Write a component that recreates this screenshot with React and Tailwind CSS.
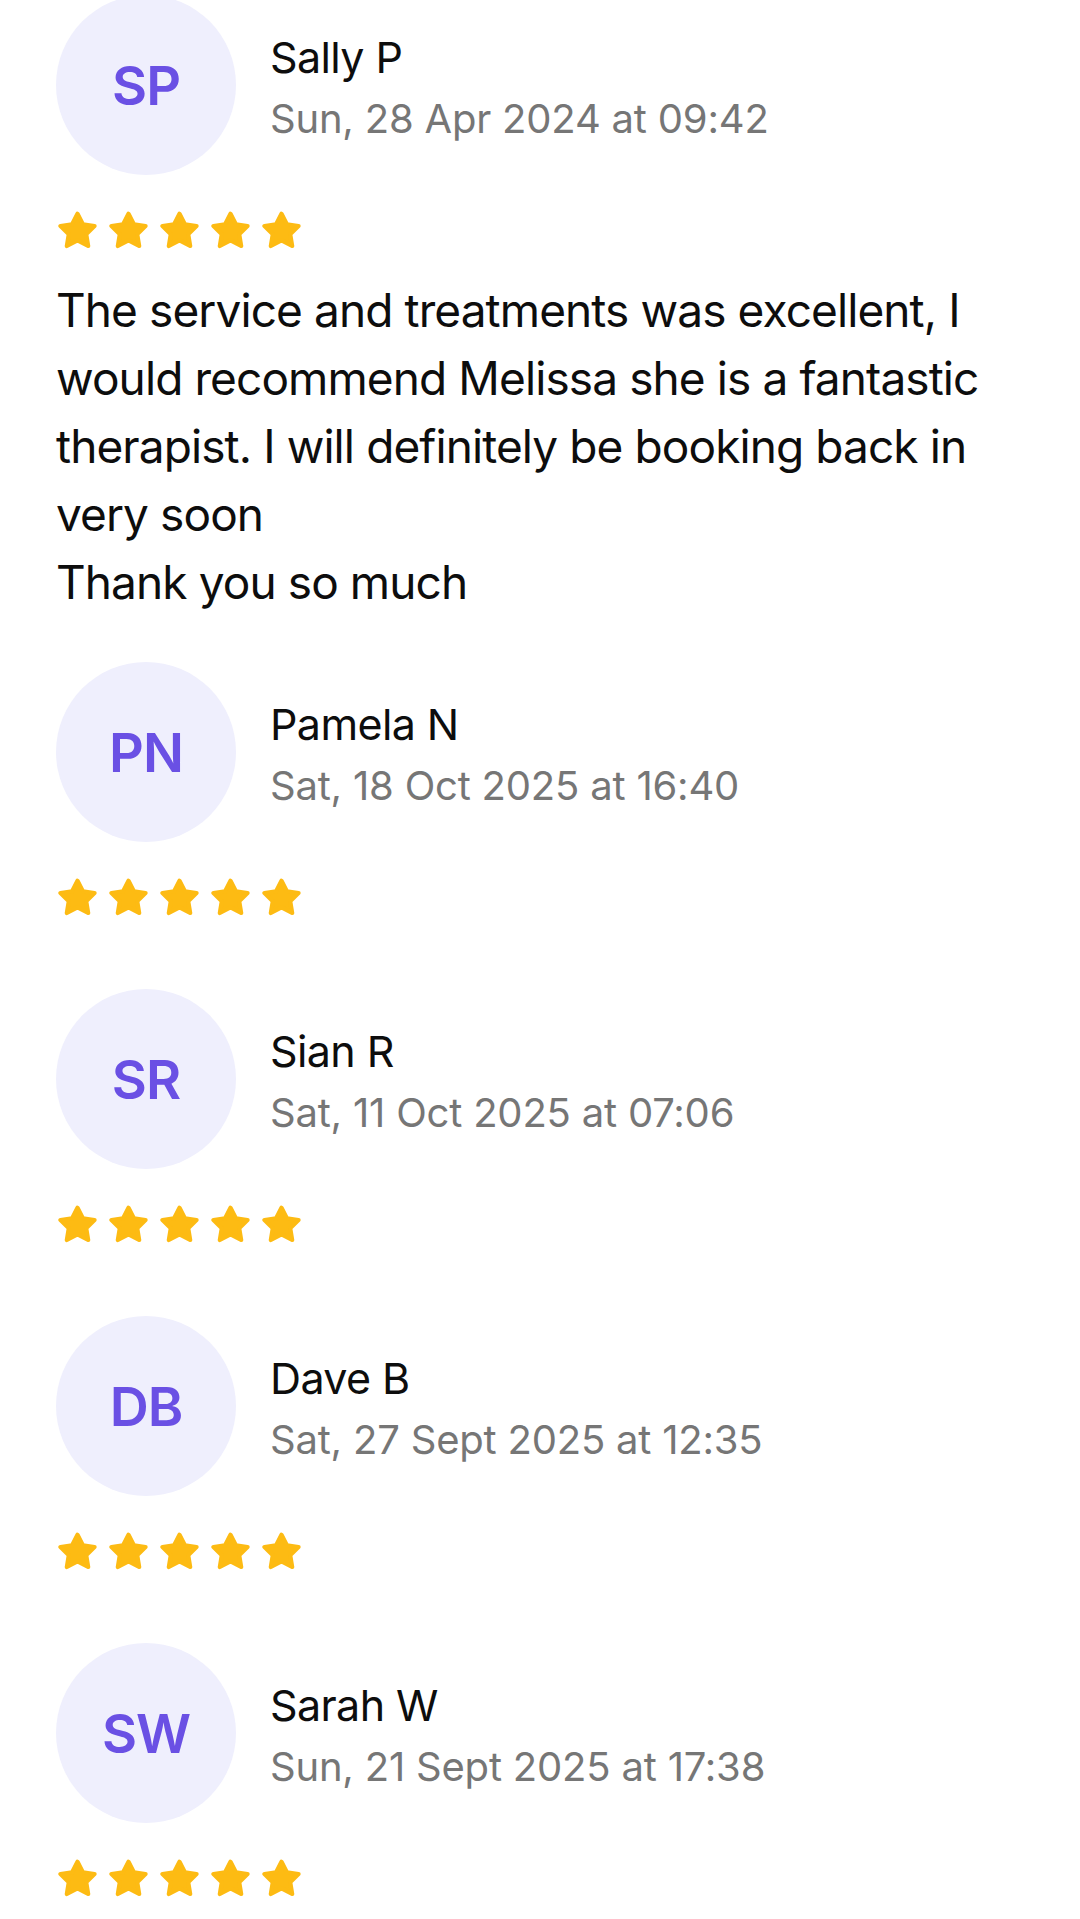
import React from "react";

const reviews = [
  {
    initials: "SP",
    name: "Sally P",
    date: "Sun, 28 Apr 2024 at 09:42",
    lines: [
      "The service and treatments was excellent, I",
      "would recommend Melissa she is a fantastic",
      "therapist. I will definitely be booking back in",
      "very soon",
      "Thank you so much",
    ],
  },
  { initials: "PN", name: "Pamela N", date: "Sat, 18 Oct 2025 at 16:40", lines: [] },
  { initials: "SR", name: "Sian R", date: "Sat, 11 Oct 2025 at 07:06", lines: [] },
  { initials: "DB", name: "Dave B", date: "Sat, 27 Sept 2025 at 12:35", lines: [] },
  { initials: "SW", name: "Sarah W", date: "Sun, 21 Sept 2025 at 17:38", lines: [] },
];

function Star() {
  return (
    <svg width="39" height="39" viewBox="1 1 22 22" className="shrink-0">
      <polygon
        points="12,2.6 15.09,8.6 21.6,9.5 16.9,14.1 18.0,20.7 12,17.6 6.0,20.7 7.1,14.1 2.4,9.5 8.91,8.6"
        fill="#FDBB13"
        stroke="#FDBB13"
        strokeWidth="2.4"
        strokeLinejoin="round"
      />
    </svg>
  );
}

function Review({ r }) {
  return (
    <div className="flex flex-col">
      <div className="flex items-center gap-[34px]">
        <div className="w-[180px] h-[180px] rounded-full bg-[#EFEFFD] flex items-center justify-center shrink-0">
          <span className="text-[54px] font-semibold text-[#6A50E4] tracking-[-1px]">{r.initials}</span>
        </div>
        <div className="flex flex-col pt-[6px]">
          <div className="text-[43px] leading-[62px] text-[#0d0d0d] tracking-[-0.6px]">{r.name}</div>
          <div className="text-[40px] leading-[62px] text-[#767676] tracking-[-0.2px]">{r.date}</div>
        </div>
      </div>
      <div className="flex gap-[12px] mt-[36px] ml-[2px] h-[38px] items-center">
        <Star />
        <Star />
        <Star />
        <Star />
        <Star />
      </div>
      <div className="mt-[27px] text-[46px] leading-[68px] text-[#0d0d0d] tracking-[-0.9px]">
        {r.lines.map((l, i) => (
          <div key={i} className="whitespace-nowrap">{l}</div>
        ))}
      </div>
    </div>
  );
}

export default function App() {
  return (
    <div
      className="min-h-[1919px] bg-white overflow-hidden"
      style={{ fontFamily: "Inter, 'Noto Sans', sans-serif" }}
    >
      <div className="flex flex-col gap-[46px] px-[56px] mt-[-5px]">
        {reviews.map((r) => (
          <Review key={r.initials} r={r} />
        ))}
      </div>
    </div>
  );
}
